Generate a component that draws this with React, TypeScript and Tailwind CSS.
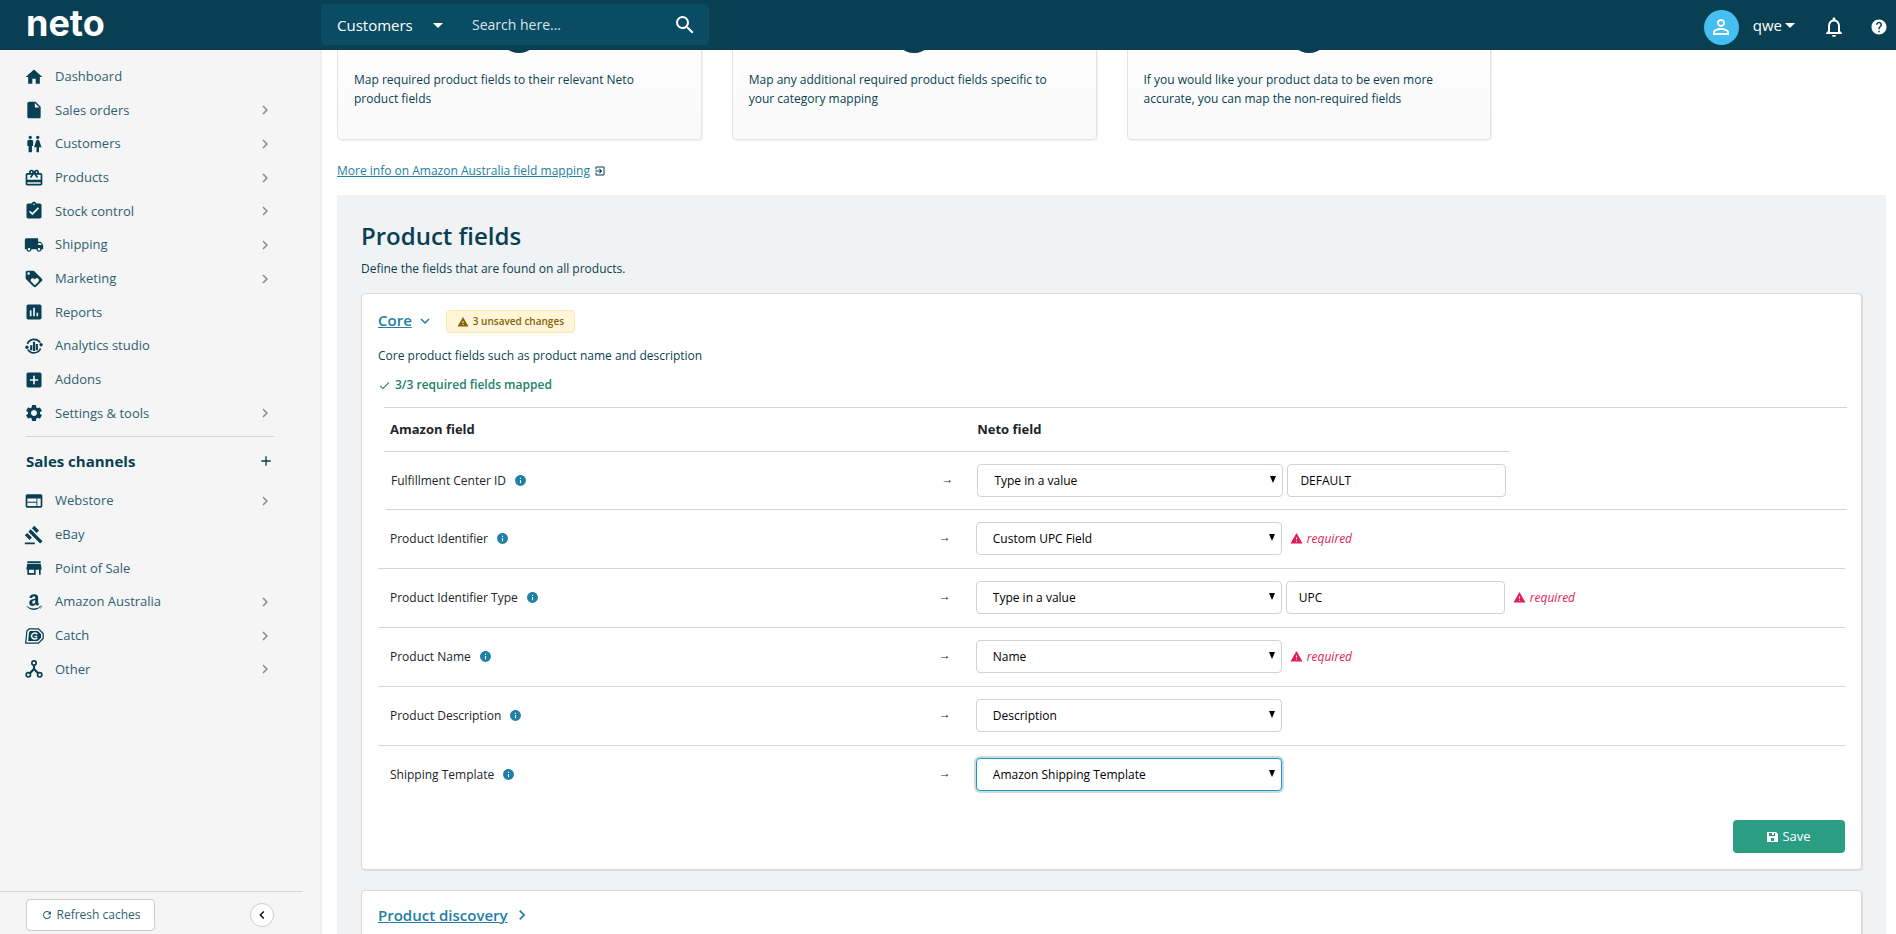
import { useState, type ReactNode } from "react";
import {
    MdAdd,
    MdAddBox,
    MdArrowDropDown,
    MdAssessment,
    MdAssignmentTurnedIn,
    MdCardGiftcard,
    MdCheck,
    MdChevronLeft,
    MdChevronRight,
    MdExitToApp,
    MdExpandMore,
    MdGavel,
    MdHelp,
    MdHome,
    MdInfo,
    MdInsertDriveFile,
    MdLocalShipping,
    MdLoyalty,
    MdNotificationsNone,
    MdPersonOutline,
    MdRefresh,
    MdSearch,
    MdSettings,
    MdStore,
    MdWarning,
    MdWc,
    MdWeb,
} from "react-icons/md";
import { FaAmazon } from "react-icons/fa";

interface NavItem {
    label: string;
    icon: ReactNode;
    expandable?: boolean;
}

interface FieldRow {
    id: string;
    label: string;
    selected: string;
    value?: string;
    required?: boolean;
}

function AnalyticsIcon() {
    return (
        <svg width="20" height="20" viewBox="0 0 24 24" fill="none" stroke="currentColor" strokeWidth="2">
            <path d="M4 9.500A8.800 8.800 0 0 1 19.500 8" />
            <path d="M20 15A8.800 8.800 0 0 1 4.500 16" />
            <circle cx="20.500" cy="10.500" r="2" fill="currentColor" stroke="none" />
            <circle cx="3.500" cy="13.500" r="2" fill="currentColor" stroke="none" />
            <path d="M8.600 11v6M12 7v11M15.400 9.500v7.500" strokeWidth="2.600" />
        </svg>
    );
}

function CatchIcon() {
    return (
        <svg width="20" height="20" viewBox="0 0 24 24" fill="none" stroke="currentColor">
            <path d="M6 3.500h11.500L23 9v6l-5.500 5.500H2L3.500 6z" strokeWidth="1.500" strokeLinejoin="round" />
            <path d="M7 6h9.500l4 4v4l-4 4H5L6 8z" fill="currentColor" stroke="none" />
            <path d="M16 9.800a4 3.400 0 1 0 0 4.500M16 12.500h-3.500" stroke="#f5f5f5" strokeWidth="1.800" />
        </svg>
    );
}

function OtherIcon() {
    return (
        <svg width="20" height="20" viewBox="0 0 24 24" fill="none" stroke="currentColor" strokeWidth="2">
            <circle cx="12" cy="4.800" r="2.600" />
            <circle cx="5.200" cy="19" r="2.600" />
            <circle cx="18.800" cy="19" r="2.600" />
            <path d="M12 7.500v6M12 12l-5 5M12 12l5 5" strokeWidth="2.600" />
        </svg>
    );
}

function SaveIcon() {
    return (
        <svg width="11" height="10" viewBox="0 0 11 10" fill="currentColor">
            <path fillRule="evenodd" d="M0 0h9l2 2v8H0zM2 1v3h6V1H7v2H5V1zM4 6v3h3V6z" />
        </svg>
    );
}

const mainNav: NavItem[] = [
    { label: "Dashboard", icon: <MdHome /> },
    { label: "Sales orders", icon: <MdInsertDriveFile />, expandable: true },
    { label: "Customers", icon: <MdWc />, expandable: true },
    { label: "Products", icon: <MdCardGiftcard />, expandable: true },
    { label: "Stock control", icon: <MdAssignmentTurnedIn />, expandable: true },
    { label: "Shipping", icon: <MdLocalShipping />, expandable: true },
    { label: "Marketing", icon: <MdLoyalty />, expandable: true },
    { label: "Reports", icon: <MdAssessment /> },
    { label: "Analytics studio", icon: <AnalyticsIcon /> },
    { label: "Addons", icon: <MdAddBox /> },
    { label: "Settings & tools", icon: <MdSettings />, expandable: true },
];

const channelNav: NavItem[] = [
    { label: "Webstore", icon: <MdWeb />, expandable: true },
    { label: "eBay", icon: <MdGavel /> },
    { label: "Point of Sale", icon: <MdStore /> },
    { label: "Amazon Australia", icon: <FaAmazon className="size-[18px]" />, expandable: true },
    { label: "Catch", icon: <CatchIcon />, expandable: true },
    { label: "Other", icon: <OtherIcon />, expandable: true },
];

const steps = [
    "Map required product fields to their relevant Neto product fields",
    "Map any additional required product fields specific to your category mapping",
    "If you would like your product data to be even more accurate, you can map the non-required fields",
];

const rows: FieldRow[] = [
    { id: "fulfillment", label: "Fulfillment Center ID", selected: "Type in a value", value: "DEFAULT" },
    { id: "identifier", label: "Product Identifier", selected: "Custom UPC Field", required: true },
    { id: "identifier-type", label: "Product Identifier Type", selected: "Type in a value", value: "UPC", required: true },
    { id: "name", label: "Product Name", selected: "Name", required: true },
    { id: "description", label: "Product Description", selected: "Description" },
    { id: "shipping", label: "Shipping Template", selected: "Amazon Shipping Template" },
];

const options = ["Type in a value", "Custom UPC Field", "Name", "Description", "Amazon Shipping Template"];

function Header() {
    return (
        <header className="relative z-10 flex h-[50px] shrink-0 items-center bg-[#083f52] text-white">
            <a href="#" className="w-[321px] shrink-0 pb-1 pl-[26px] font-['Inter',sans-serif] text-4xl leading-[46px] font-bold">
                neto
            </a>
            <form className="mb-px flex h-[41px] w-[388px] items-center rounded bg-[#0b4c65]">
                <button type="button" className="flex w-[135px] items-center justify-between pr-1.5 pl-4 text-[15px]">
                    Customers
                    <MdArrowDropDown className="size-6" />
                </button>
                <input
                    aria-label="Search"
                    placeholder="Search here..."
                    className="ml-4 min-w-0 flex-1 text-sm outline-none placeholder:text-[#dbe5e9]"
                />
                <button type="submit" aria-label="Search" className="mr-3">
                    <MdSearch className="size-6" />
                </button>
            </form>
            <div className="ml-auto flex items-center pt-1">
                <span className="flex size-[35px] items-center justify-center rounded-full bg-[#45bff0]">
                    <MdPersonOutline className="size-6" />
                </span>
                <button className="mb-1 ml-3.5 flex items-center text-[15px]">
                    qwe
                    <MdArrowDropDown className="-ml-1 size-6" />
                </button>
                <button aria-label="Notifications" className="ml-5">
                    <MdNotificationsNone className="size-6" />
                </button>
                <button aria-label="Help" className="mr-2 ml-6">
                    <MdHelp className="size-[18px]" />
                </button>
            </div>
        </header>
    );
}

function NavList({ items }: { items: NavItem[] }) {
    return (
        <ul className="flex h-full flex-col">
            {items.map((item) => (
                <li key={item.label} className="flex flex-1 items-center">
                    <a href="#" className="flex flex-1 items-center text-[13px] text-[#2f5f70]">
                        <span className="mr-[11px] flex size-5 items-center justify-center text-xl text-[#083f52]">{item.icon}</span>
                        {item.label}
                        {item.expandable && <MdChevronRight className="ml-auto size-[18px] text-[#8a8a8a]" />}
                    </a>
                </li>
            ))}
        </ul>
    );
}

function Sidebar() {
    return (
        <aside className="flex w-[322px] shrink-0 flex-col border-r-2 border-[#f0f0f0] bg-[#f5f5f5] pt-[10px]">
            <nav className="w-[274px] pl-6">
                <div className="h-[370px]">
                    <NavList items={mainNav} />
                </div>
                <div className="mt-1.5 ml-0.5 flex items-center justify-between border-t border-[#d4d4d4] pt-[13px] text-[#083f52]">
                    <h2 className="text-[15px] leading-[22px] font-bold">Sales channels</h2>
                    <button aria-label="Add sales channel">
                        <MdAdd className="size-4" />
                    </button>
                </div>
                <div className="mt-3 h-[202px]">
                    <NavList items={channelNav} />
                </div>
            </nav>
            <footer className="mt-auto mr-[17px] flex items-center justify-between border-t border-[#d4d4d4] pt-[7px] pr-[29px] pb-[3px] pl-[26px]">
                <button className="flex h-8 w-[129px] items-center justify-center gap-1 rounded border border-[#cdcdcd] bg-white text-[#2f5f70]">
                    <MdRefresh className="size-3" />
                    Refresh caches
                </button>
                <button
                    aria-label="Collapse menu"
                    className="flex size-6 items-center justify-center rounded-full border border-[#cdcdcd] bg-white text-black"
                >
                    <MdChevronLeft className="size-4" />
                </button>
            </footer>
        </aside>
    );
}

function FieldSelect({ row }: { row: FieldRow }) {
    const [selected, setSelected] = useState(row.selected);
    const focused = row.id === "shipping";

    return (
        <div className="relative w-[306px]">
            <select
                id={row.id}
                value={selected}
                onChange={(e) => setSelected(e.target.value)}
                className={`block h-[33px] w-full appearance-none rounded border bg-white pl-4 text-black outline-none ${
                    focused ? "border-[#1c97c4] shadow-[0_0_0_2px_#cddce2]" : "border-[#ced2da]"
                }`}
            >
                {options.map((option) => (
                    <option key={option}>{option}</option>
                ))}
            </select>
            <svg className="pointer-events-none absolute top-3 right-[7px] h-[7px] w-[6px]" viewBox="0 0 6 7">
                <path d="M0 0h6L3 7z" fill="#000" />
            </svg>
        </div>
    );
}

function MappingTable() {
    return (
        <table className="mt-3 block text-[#212529]">
            <thead className="block">
                <tr className="-mr-0.5 ml-1.5 flex border-t border-[#d5d6d8] text-left text-[13px] leading-[43px]">
                    <th className="w-2/5 border-b border-[#d5d6d8] pl-1.5 font-bold">Amazon field</th>
                    <th className="w-[37%] border-b border-[#d5d6d8] pl-2 font-bold">Neto field</th>
                </tr>
            </thead>
            <tbody className="block">
                {rows.map((row, i) => (
                    <tr
                        key={row.id}
                        className={`flex items-start border-[#d5d6d8] pt-3 ${
                            i === 0 ? "-mr-0.5 ml-2 h-[58px]" : "h-[59px]"
                        } ${i < rows.length - 1 ? "border-b" : ""}`}
                    >
                        <td className={`flex h-[33px] w-2/5 items-center ${i === 0 ? "pr-[17px] pl-[5px]" : "pr-3.5 pl-3"}`}>
                            <label htmlFor={row.id}>{row.label}</label>
                            <MdInfo className="ml-2 size-[13px] text-[#2180a5]" />
                            <span className="ml-auto pb-1">→</span>
                        </td>
                        <td className={`flex items-center gap-1 ${i === 0 ? "pl-[7px]" : "pl-[11px]"}`}>
                            <FieldSelect row={row} />
                            {row.value && (
                                <input
                                    aria-label={`${row.label} value`}
                                    defaultValue={row.value}
                                    className="h-[33px] w-[219px] rounded border border-[#ced2da] bg-white px-3 text-black outline-none"
                                />
                            )}
                            {row.required && (
                                <span className="ml-1 flex items-center gap-1 text-[#e21b59] italic">
                                    <MdWarning className="size-[13px]" />
                                    required
                                </span>
                            )}
                        </td>
                    </tr>
                ))}
            </tbody>
        </table>
    );
}

function Panel({ children }: { children: ReactNode }) {
    return (
        <section className="rounded border border-[#d8dadc] bg-white px-4 shadow-[1px_1px_1px_rgba(0,0,0,0.08)]">
            {children}
        </section>
    );
}

export default function App() {
    return (
        <div className="flex h-screen flex-col overflow-hidden bg-white font-['Open_Sans',sans-serif] text-xs text-[#083f52]">
            <Header />
            <div className="flex min-h-0 flex-1">
                <Sidebar />
                <main className="min-w-0 flex-1 overflow-hidden pr-[10px] pl-[15px]">
                    {/* steps are partly scrolled under the header */}
                    <div className="-mt-[50px] grid grid-cols-4 gap-[30px]">
                        {steps.map((step) => (
                            <div
                                key={step}
                                className="h-[140px] rounded border border-[#e4e4e4] bg-linear-to-b from-white to-[#fafafa] px-4 pt-3 shadow-[1px_1px_1px_rgba(0,0,0,0.06)]"
                            >
                                <div className="mx-auto size-10 rounded-full bg-[#083f52]" />
                                <p className="mt-[17px] pr-3 leading-[19px]">{step}</p>
                            </div>
                        ))}
                    </div>
                    <p className="mt-[21px] flex items-center leading-5">
                        <a href="#" className="text-[#2180a5] underline">
                            More info on Amazon Australia field mapping
                        </a>
                        <MdExitToApp className="ml-1 size-3" />
                    </p>
                    <div className="mt-3.5 bg-[#f1f2f4] px-6 pt-6">
                        <h1 className="text-2xl leading-[34px] font-semibold">Product fields</h1>
                        <p className="mt-1.5 leading-5">Define the fields that are found on all products.</p>
                        <div className="mt-3.5 flex flex-col gap-5">
                            <Panel>
                                <div className="flex h-[39px] items-end">
                                    <button className="flex items-center text-[15px] leading-[25px] font-semibold text-[#2180a5]">
                                        <span className="underline">Core</span>
                                        <MdExpandMore className="ml-1 size-[18px]" />
                                    </button>
                                    <span className="ml-3 flex h-[23px] items-center gap-1 rounded border border-[#ffe9a8] bg-[#fff5d9] px-2.5 text-[10px] font-semibold text-[#856404]">
                                        <MdWarning className="size-3" />
                                        3 unsaved changes
                                    </span>
                                </div>
                                <p className="mt-[13px] leading-5">Core product fields such as product name and description</p>
                                <p className="mt-[9px] flex items-center gap-1 leading-5 font-semibold text-[#22816a]">
                                    <MdCheck className="size-[13px]" />
                                    3/3 required fields mapped
                                </p>
                                <MappingTable />
                                <div className="flex justify-end pt-[15px] pb-4">
                                    <button className="flex h-[33px] w-28 items-center justify-center gap-1 rounded bg-[#2b9d82] text-[13px] text-white">
                                        <SaveIcon />
                                        Save
                                    </button>
                                </div>
                            </Panel>
                            <Panel>
                                <button className="flex items-center py-3.5 text-[15px] font-semibold text-[#2180a5]">
                                    <span className="underline">Product discovery</span>
                                    <MdChevronRight className="ml-1 size-5" />
                                </button>
                            </Panel>
                        </div>
                    </div>
                </main>
            </div>
        </div>
    );
}
